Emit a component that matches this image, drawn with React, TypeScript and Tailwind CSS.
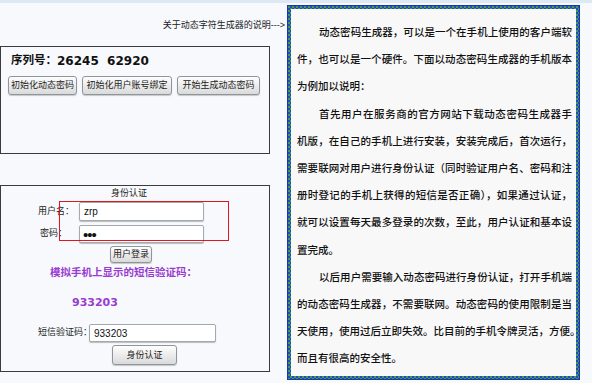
import React from "react";

const cjk = "font-['Liberation_Sans','Noto_Sans_CJK_SC',sans-serif]";
const btn =
    "flex items-center justify-center rounded-[3px] border border-[#8e959b] bg-linear-to-b from-[#fefefe] to-[#dadada] shadow-[0_1px_1px_rgba(0,0,0,0.2)] text-[9px] leading-none text-[#222]";
const input =
    "flex items-center bg-white border border-[#a2a9b0] rounded-[2px] shadow-[0_1px_1px_rgba(0,0,0,0.25)] px-[4px] text-[10px] text-[#111]";

const lines: { text: string; indent?: boolean; last?: boolean }[] = [
    { text: "动态密码生成器，可以是一个在手机上使用的客户端软", indent: true },
    { text: "件，也可以是一个硬件。下面以动态密码生成器的手机版本" },
    { text: "为例加以说明：", last: true },
    { text: "首先用户在服务商的官方网站下载动态密码生成器手", indent: true },
    { text: "机版，在自己的手机上进行安装，安装完成后，首次运行，" },
    { text: "需要联网对用户进行身份认证（同时验证用户名、密码和注" },
    { text: "册时登记的手机上获得的短信是否正确），如果通过认证，" },
    { text: "就可以设置每天最多登录的次数，至此，用户认证和基本设" },
    { text: "置完成。", last: true },
    { text: "以后用户需要输入动态密码进行身份认证，打开手机端", indent: true },
    { text: "的动态密码生成器，不需要联网。动态密码的使用限制是当" },
    { text: "天使用，使用过后立即失效。比目前的手机令牌灵活，方便。" },
    { text: "而且有很高的安全性。", last: true },
];

export default function App() {
    return (
        <div className={`w-[592px] h-[383px] overflow-hidden bg-[#f7f9fc] border-t-[3px] border-[#dce8f4] flex ${cjk}`}>
            {/* Left column */}
            <div className="w-[287px] flex flex-col">
                <div className="h-[43px] pt-[16px] pr-[2px] text-right text-[9px] leading-[12px] text-[#222] whitespace-nowrap">
                    关于动态字符生成器的说明---&gt;
                </div>

                {/* Serial box */}
                <div className="w-[270px] h-[108px] border border-[#3c3c3c] pt-[6px]">
                    <div className="pl-[10px] h-[16px] flex items-center font-bold text-[#111] whitespace-nowrap">
                        <span className="text-[11.5px]">序列号：</span>
                        <span className="text-[12px] font-['DejaVu_Sans',sans-serif] whitespace-pre">26245  62920</span>
                    </div>
                    <div className="mt-[7px] pl-[7px] flex gap-[5px]">
                        <button className={`${btn} w-[69px] h-[19px]`}>初始化动态密码</button>
                        <button className={`${btn} w-[90px] h-[19px]`}>初始化用户账号绑定</button>
                        <button className={`${btn} w-[83px] h-[19px]`}>开始生成动态密码</button>
                    </div>
                </div>

                {/* Auth box */}
                <div className="relative mt-[31px] w-[270px] h-[187px] border border-[#3c3c3c] text-[9px] text-[#222]">
                    <div className="pt-[1px] pl-[110px] leading-[12px]">身份认证</div>

                    <div className="mt-[3px] flex items-center">
                        <div className="w-[78px] pl-[37px] whitespace-nowrap">用户名：</div>
                        <div className={`${input} w-[125px] h-[19px]`}>zrp</div>
                    </div>
                    <div className="mt-[4px] flex items-center">
                        <div className="w-[78px] pl-[39px] whitespace-nowrap">密码：</div>
                        <div className={`${input} w-[125px] h-[18px] text-[15px] leading-none tracking-[-1px] pl-[3px]`}>•••</div>
                    </div>

                    <button className={`${btn} mt-[3px] ml-[109px] w-[42px] h-[17px]`}>用户登录</button>

                    <div className="mt-[2px] pl-[49px] leading-[14px] text-[10.5px] font-bold text-[#9a3bd2] whitespace-nowrap">
                        模拟手机上显示的短信验证码：
                    </div>
                    <div className="mt-[17px] pl-[71px] leading-[14px] text-[11px] font-bold text-[#9a3bd2] font-['DejaVu_Sans',sans-serif]">
                        933203
                    </div>

                    <div className="mt-[14px] flex items-center">
                        <div className="w-[88px] pl-[37px] whitespace-nowrap">短信验证码：</div>
                        <div className={`${input} w-[127px] h-[18px] px-[3px]`}>933203</div>
                    </div>
                    <button className={`${btn} mt-[3px] ml-[111px] w-[65px] h-[20px]`}>身份认证</button>

                    {/* red highlight */}
                    <div className="absolute left-[58px] top-[15px] w-[170px] h-[40px] border border-[#e0161c]" />
                </div>
            </div>

            {/* Right panel */}
            <div className="mt-[2px] w-[293px] h-[375px] border border-[#1c36a8] p-[3px] bg-[repeating-conic-gradient(#2346c4_0%_25%,#3f9e52_0%_50%)] bg-[length:4px_4px]">
                <div className="h-full bg-[#f8f8f8] pt-[9px] pl-[6px] pr-[4px] text-[10.5px] leading-[27.2px] font-medium text-[#111] font-['Noto_Sans_CJK_SC',sans-serif]">
                    {lines.map((l, i) => (
                        <div
                            key={i}
                            className={`whitespace-nowrap ${l.indent ? "pl-[22px]" : ""} ${l.last ? "" : "text-justify [text-align-last:justify]"}`}
                        >
                            {l.text}
                        </div>
                    ))}
                </div>
            </div>
        </div>
    );
}
